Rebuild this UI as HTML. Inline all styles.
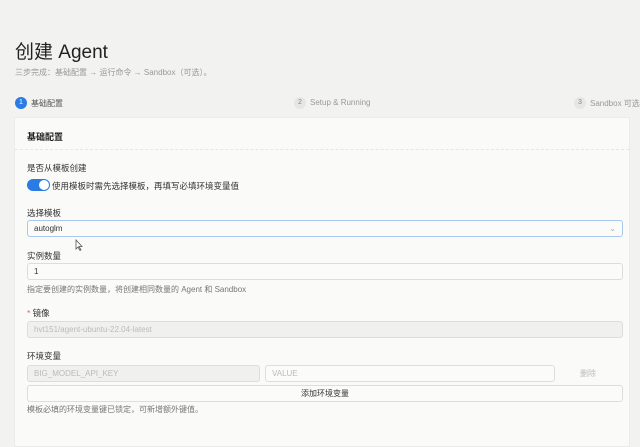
<!DOCTYPE html>
<html><head><meta charset="utf-8"><style>
*{box-sizing:border-box;margin:0;padding:0}
body{width:640px;height:432px;overflow:hidden;background:#f2f2f0;font-family:"Liberation Sans","Noto Sans CJK SC",sans-serif;color:#333;position:relative}
.a{position:absolute;white-space:nowrap}
.lbl{font-size:8.5px;color:#333}
.help{font-size:8px;color:#777}
.inp{position:absolute;height:17px;border:1px solid #ddd;border-radius:3px;background:#fbfbf9;font-size:8px;padding:0 6px;line-height:15px}
</style></head><body>
<div class="a" style="left:15px;top:37px;font-size:19px;color:#222">创建 Agent</div>
<div class="a" style="left:15px;top:67px;font-size:8px;color:#999">三步完成：基础配置 → 运行命令 → Sandbox（可选）。</div>
<div class="a" style="left:15px;top:97px;width:12px;height:12px;border-radius:50%;background:#2a7be4;color:#fff;font-size:7px;text-align:center;line-height:12px">1</div>
<div class="a" style="left:31px;top:98px;font-size:8px;color:#555">基础配置</div>
<div class="a" style="left:294px;top:97px;width:12px;height:12px;border-radius:50%;background:#e6e6e4;color:#888;font-size:7px;text-align:center;line-height:12px">2</div>
<div class="a" style="left:310px;top:98px;font-size:8px;color:#999">Setup &amp; Running</div>
<div class="a" style="left:574px;top:97px;width:12px;height:12px;border-radius:50%;background:#e6e6e4;color:#888;font-size:7px;text-align:center;line-height:12px">3</div>
<div class="a" style="left:590px;top:98px;font-size:8px;color:#999">Sandbox 可选</div>
<div class="a" style="left:14px;top:117px;width:616px;height:330px;background:#fafaf8;border:1px solid #ebebe8"></div>
<div class="a" style="left:27px;top:130px;font-size:9px;font-weight:bold;color:#222">基础配置</div>
<div class="a" style="left:15px;top:149px;width:614px;border-top:1px dashed #e6e6e4"></div>
<div class="a lbl" style="left:27px;top:162px">是否从模板创建</div>
<div class="a" style="left:27px;top:179px;width:23px;height:12px;border-radius:6px;background:#2a7be4"></div>
<div class="a" style="left:39px;top:180px;width:10px;height:10px;border-radius:50%;background:#fff"></div>
<div class="a lbl" style="left:52px;top:180px">使用模板时需先选择模板，再填写必填环境变量值</div>
<div class="a lbl" style="left:27px;top:207px">选择模板</div>
<div class="inp" style="left:27px;top:220px;width:596px;border-color:#a9c8ee;color:#333">autoglm<span style="position:absolute;right:6px;color:#aaa;font-size:8px">⌄</span></div>
<div class="a lbl" style="left:27px;top:250px">实例数量</div>
<div class="inp" style="left:27px;top:263px;width:596px">1</div>
<div class="a help" style="left:27px;top:284px">指定要创建的实例数量，将创建相同数量的 Agent 和 Sandbox</div>
<div class="a lbl" style="left:27px;top:307px"><span style="color:#e06070">*</span> 镜像</div>
<div class="inp" style="left:27px;top:321px;width:596px;background:#f0f0ee;color:#bbb">hvt151/agent-ubuntu-22.04-latest</div>
<div class="a lbl" style="left:27px;top:350px">环境变量</div>
<div class="inp" style="left:27px;top:365px;width:233px;background:#f0f0ee;color:#bbb">BIG_MODEL_API_KEY</div>
<div class="inp" style="left:265px;top:365px;width:290px;color:#bbb">VALUE</div>
<div class="a" style="left:580px;top:368px;font-size:8px;color:#bbb">删除</div>
<div class="inp" style="left:27px;top:385px;width:596px;text-align:center;color:#333">添加环境变量</div>
<div class="a help" style="left:27px;top:404px">模板必填的环境变量键已锁定，可新增额外键值。</div>
<svg class="a" style="left:75px;top:239px" width="8" height="12" viewBox="0 0 8 12"><path d="M1 1v9l2-2 2 3.5 1-.6L4 7.5h3z" fill="#fff" stroke="#555" stroke-width=".8"/></svg>
</body></html>
